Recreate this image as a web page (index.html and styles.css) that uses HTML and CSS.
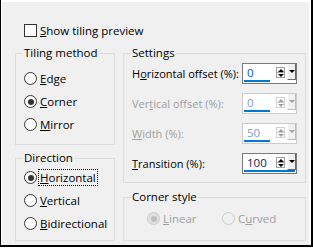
FILE: index.html
```html
<!DOCTYPE html>
<html lang="en">
<head>
    <meta charset="UTF-8">
    <title>Tiling</title>
    <link rel="stylesheet" href="styles.css">
</head>
<body>
    <div class="window">
        <div class="panel">
            <label class="check-row">
                <span class="checkbox"></span>
                <span><u>S</u>how tiling preview</span>
            </label>

            <div class="columns">
                <div class="col col-left">
                    <fieldset class="group group-tiling">
                        <legend>Tiling method</legend>
                        <label class="radio-row"><span class="radio"></span><span><u>E</u>dge</span></label>
                        <label class="radio-row"><span class="radio checked"></span><span><u>C</u>orner</span></label>
                        <label class="radio-row"><span class="radio"></span><span><u>M</u>irror</span></label>
                    </fieldset>

                    <fieldset class="group group-direction">
                        <legend>Direction</legend>
                        <label class="radio-row"><span class="radio checked"></span><span class="focus"><u>H</u>orizontal</span></label>
                        <label class="radio-row"><span class="radio"></span><span><u>V</u>ertical</span></label>
                        <label class="radio-row"><span class="radio"></span><span><u>B</u>idirectional</span></label>
                    </fieldset>
                </div>

                <div class="col col-right">
                    <fieldset class="group group-settings">
                        <legend>Settings</legend>
                        <div class="field-row">
                            <span class="field-label">H<u>o</u>rizontal offset (%):</span>
                            <div class="spin">
                                <div class="spin-main">
                                    <span class="spin-value">0</span>
                                    <span class="arrows"><i class="up"></i><i class="down"></i></span>
                                    <span class="drop"></span>
                                </div>
                                <span class="bar" style="width: 26px"></span>
                            </div>
                        </div>
                        <div class="field-row disabled">
                            <span class="field-label">Ver<u>t</u>ical offset (%):</span>
                            <div class="spin">
                                <div class="spin-main">
                                    <span class="spin-value">0</span>
                                    <span class="arrows"><i class="up"></i><i class="down"></i></span>
                                    <span class="drop"></span>
                                </div>
                                <span class="bar" style="width: 26px"></span>
                            </div>
                        </div>
                        <div class="field-row disabled">
                            <span class="field-label"><u>W</u>idth (%):</span>
                            <div class="spin">
                                <div class="spin-main">
                                    <span class="spin-value">50</span>
                                    <span class="arrows"><i class="up"></i><i class="down"></i></span>
                                    <span class="drop"></span>
                                </div>
                                <span class="bar" style="width: 26px"></span>
                            </div>
                        </div>
                        <div class="field-row">
                            <span class="field-label"><u>T</u>ransition (%):</span>
                            <div class="spin">
                                <div class="spin-main">
                                    <span class="spin-value dark">100</span>
                                    <span class="arrows"><i class="up"></i><i class="down"></i></span>
                                    <span class="drop"></span>
                                </div>
                                <span class="bar" style="width: 51px"></span>
                            </div>
                        </div>
                    </fieldset>

                    <fieldset class="group group-corner">
                        <legend>Corner style</legend>
                        <div class="corner-row">
                            <label class="radio-row disabled"><span class="radio checked"></span><span><u>L</u>inear</span></label>
                            <label class="radio-row disabled"><span class="radio"></span><span>C<u>u</u>rved</span></label>
                        </div>
                    </fieldset>
                </div>
            </div>
        </div>
    </div>
</body>
</html>
```

FILE: styles.css
```css
/* Dialog frame */
body {
    margin: 0;
    background: #fff;
    font-family: 'Open Sans', sans-serif;
    font-size: 11.5px;
    color: #000;
}

.window {
    width: 313px;
    height: 247px;
    box-sizing: border-box;
    border-left: 1px solid #000;
    border-right: 2px solid #000;
    border-bottom: 2px solid #000;
    display: flex;
}

.panel {
    flex: 1;
    background: #f0f0f0;
    border-top: 2px solid #fff;
    border-left: 1px solid #fff;
    border-right: 2px solid #fff;
    padding-left: 13px;
}

u {
    text-decoration: underline;
    text-underline-offset: 1px;
}

/* Checkbox */
.check-row {
    display: flex;
    align-items: center;
    gap: 3px;
    height: 13px;
    margin: 22px 0 0 9px;
}

.checkbox {
    width: 11px;
    height: 11px;
    border: 1px solid #333;
    background: #fff;
}

/* Columns and groups */
.columns {
    display: flex;
    gap: 8px;
    margin-top: 8px;
}

.col {
    display: flex;
    flex-direction: column;
}

.col-left {
    width: 100px;
    gap: 5px;
}

.col-right {
    width: 183px;
    gap: 6px;
}

.group {
    margin: 0;
    padding: 0 8px;
    border: 1px solid #dcdcdc;
    box-sizing: border-box;
    min-width: 0;
}

.group legend {
    padding: 0 1px;
    margin-left: -1px;
    line-height: 16px;
}

.group-tiling {
    height: 100px;
    padding-top: 6px;
}

.group-direction {
    height: 91px;
}

.group-settings {
    height: 138px;
    padding-top: 2px;
}

.group-corner {
    height: 52px;
}

/* Radio buttons */
.radio-row {
    display: flex;
    align-items: center;
    gap: 3px;
    height: 23px;
}

.radio {
    width: 11px;
    height: 11px;
    border: 1px solid #333;
    border-radius: 50%;
    background: #fff;
    display: flex;
    align-items: center;
    justify-content: center;
    flex-shrink: 0;
}

.radio.checked::after {
    content: "";
    width: 6px;
    height: 6px;
    border-radius: 50%;
    background: #333;
}

.focus {
    outline: 1px dotted #000;
    outline-offset: 0;
    padding: 0 1px;
    margin-left: -1px;
}

.radio-row.disabled {
    color: #a0a0a0;
}

.radio-row.disabled .radio {
    border-color: #cccccc;
    background: #f0f0f0;
}

.radio-row.disabled .radio.checked {
    background: #e0e0e0;
}

.radio-row.disabled .radio.checked::after {
    background: #bfbfbf;
}

.corner-row {
    display: flex;
    margin: 2px 0 0 15px;
}

.corner-row .radio-row {
    width: 81px;
}

/* Number fields */
.field-row {
    display: flex;
    align-items: center;
    justify-content: space-between;
    height: 21px;
    margin-bottom: 9px;
}

.field-label {
    font-size: 11px;
    white-space: nowrap;
}

.field-row.disabled .field-label {
    color: #a0a0a0;
}

.spin {
    width: 55px;
    height: 21px;
    flex-shrink: 0;
    box-sizing: border-box;
    border: 1px solid #7a7a7a;
    background: #fff;
    display: flex;
    flex-direction: column;
}

.field-row.disabled .spin {
    border-color: #cccccc;
}

.spin-main {
    flex: 1;
    display: flex;
}

.spin-value {
    flex: 1;
    padding: 2px 0 0 4px;
    color: #0050c8;
    line-height: 14px;
}

.spin-value.dark {
    color: #101850;
}

.field-row.disabled .spin-value {
    color: #7c9bd0;
}

.arrows {
    width: 9px;
    margin: 3px 2px 0 1px;
    display: flex;
    flex-direction: column;
}

.arrows i {
    height: 4px;
    border: 1px solid #a0a0a0;
    background: #fff;
    display: flex;
    align-items: center;
    justify-content: center;
}

.arrows i + i {
    border-top: none;
}

.arrows .up::after {
    content: "";
    border-left: 3px solid transparent;
    border-right: 3px solid transparent;
    border-bottom: 3px solid #000;
}

.arrows .down::after {
    content: "";
    border-left: 3px solid transparent;
    border-right: 3px solid transparent;
    border-top: 3px solid #000;
}

.drop {
    width: 9px;
    background: #f0f0f0;
    border-left: 1px solid #fff;
    border-right: 1px solid #696969;
    border-bottom: 1px solid #696969;
    display: flex;
    justify-content: center;
    padding-top: 6px;
    box-sizing: border-box;
}

.drop::after {
    content: "";
    height: 0;
    border-left: 3px solid transparent;
    border-right: 3px solid transparent;
    border-top: 3px solid #000;
}

.field-row.disabled .arrows i {
    border-color: #d0d0d0;
}

.field-row.disabled .arrows i::after {
    border-bottom-color: #a0a0a0;
    border-top-color: #a0a0a0;
}

.field-row.disabled .drop {
    border-right-color: #bcbcbc;
    border-bottom-color: #bcbcbc;
}

.field-row.disabled .drop::after {
    border-top-color: #a0a0a0;
}

.bar {
    height: 3px;
    margin: 0 0 1px 1px;
    background: #0078d7;
}
```
